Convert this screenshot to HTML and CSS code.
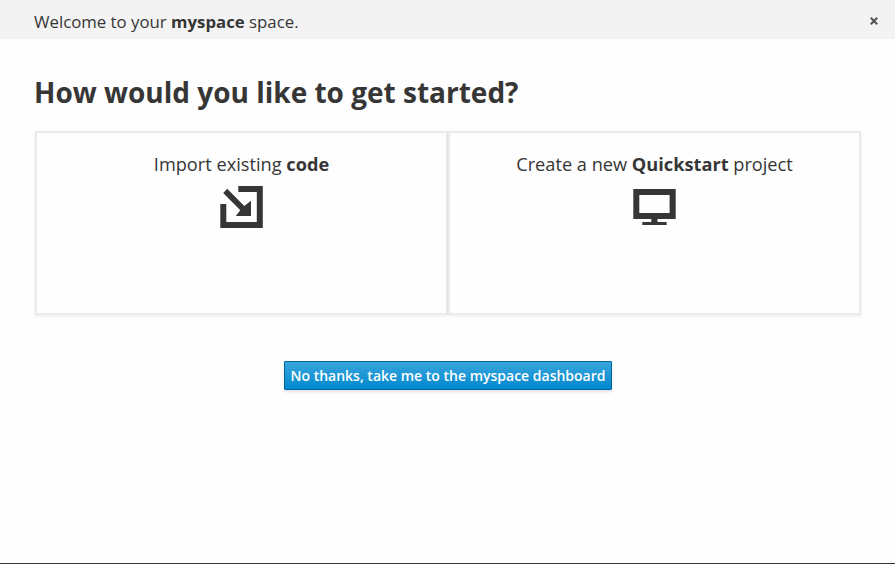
FILE: index.html
```html
<!DOCTYPE html>
<html lang="en">
<head>
<meta charset="utf-8">
<title>Get started</title>
<link rel="stylesheet" href="styles.css">
</head>
<body>
<div class="page">
  <header class="topbar">
    <span class="welcome">Welcome to your <b>myspace</b> space.</span>
    <button class="close" aria-label="Close"><svg width="8" height="8" viewBox="0 0 8 8"><path d="M.8.8l6.4 6.4M7.2.8L.8 7.2"/></svg></button>
  </header>
  <main class="content">
    <h1>How would you like to get started?</h1>
    <div class="cards">
      <section class="card">
        <p>Import existing <b>code</b></p>
        <svg class="icon" width="45" height="42" viewBox="0 0 45 42"><path d="M19.3 0H43.8V42H1.3V18H7.3V36H37.8V6H19.3ZM8.2 2.8 25.3 19.9 32 14.8V30H16.8L21.3 24.2 4.2 7.1Z"/></svg>
      </section>
      <section class="card">
        <p>Create a new <b>Quickstart</b> project</p>
        <svg class="icon" width="45" height="42" viewBox="0 0 45 42"><path fill-rule="evenodd" d="M1.3 3H43.7V33H25.5V36H34.6V39H10.3V36H19.3V33H1.3ZM7.3 9V27H37.6V9Z"/></svg>
      </section>
    </div>
    <button class="primary">No thanks, take me to the myspace dashboard</button>
  </main>
</div>
</body>
</html>
```
FILE: styles.css
```css
* { box-sizing: border-box; }
body {
  margin: 0;
  background: #fefefe;
  color: #363636;
  font-family: "Open Sans", sans-serif;
}
.page {
  height: 564px;
  display: flex;
  flex-direction: column;
  border-bottom: 1px solid #363636;
}
.topbar {
  height: 39px;
  flex: none;
  display: flex;
  align-items: center;
  justify-content: space-between;
  padding: 4px 17px 0 34px;
  background: #f3f3f3;
}
.welcome { font-size: 16.8px; line-height: 24px; }
b { font-weight: 700; }
.close {
  display: flex;
  margin-top: -2px;
  padding: 0;
  border: 0;
  background: none;
}
.close svg { overflow: visible; stroke: #555; stroke-width: 2.1; }
.content {
  display: flex;
  flex-direction: column;
  align-items: flex-start;
  padding: 33px 34px 0;
}
h1 {
  margin: 0;
  font-size: 28px;
  line-height: 40px;
  font-weight: 700;
}
.cards {
  display: grid;
  grid-template-columns: 413px 413px;
  margin: 19px 0 46px 1px;
}
.card {
  height: 184px;
  padding-top: 19px;
  border: 2px solid #ebebeb;
  box-shadow: 0 1px 3px rgba(0, 0, 0, .08);
  text-align: center;
}
.card p { margin: 0 0 9px; font-size: 18.2px; line-height: 25px; }
.icon { display: block; margin: 0 auto; fill: #363636; }
.primary {
  align-self: center;
  width: 328px;
  height: 29px;
  padding: 0 0 0 1px;
  border: 1px solid #00659c;
  border-radius: 1px;
  background: linear-gradient(#39a5dc, #0088ce);
  box-shadow: 0 2px 3px rgba(3, 3, 3, .1);
  color: #fff;
  font: 600 14px/27px "Open Sans", sans-serif;
  white-space: nowrap;
}
```
